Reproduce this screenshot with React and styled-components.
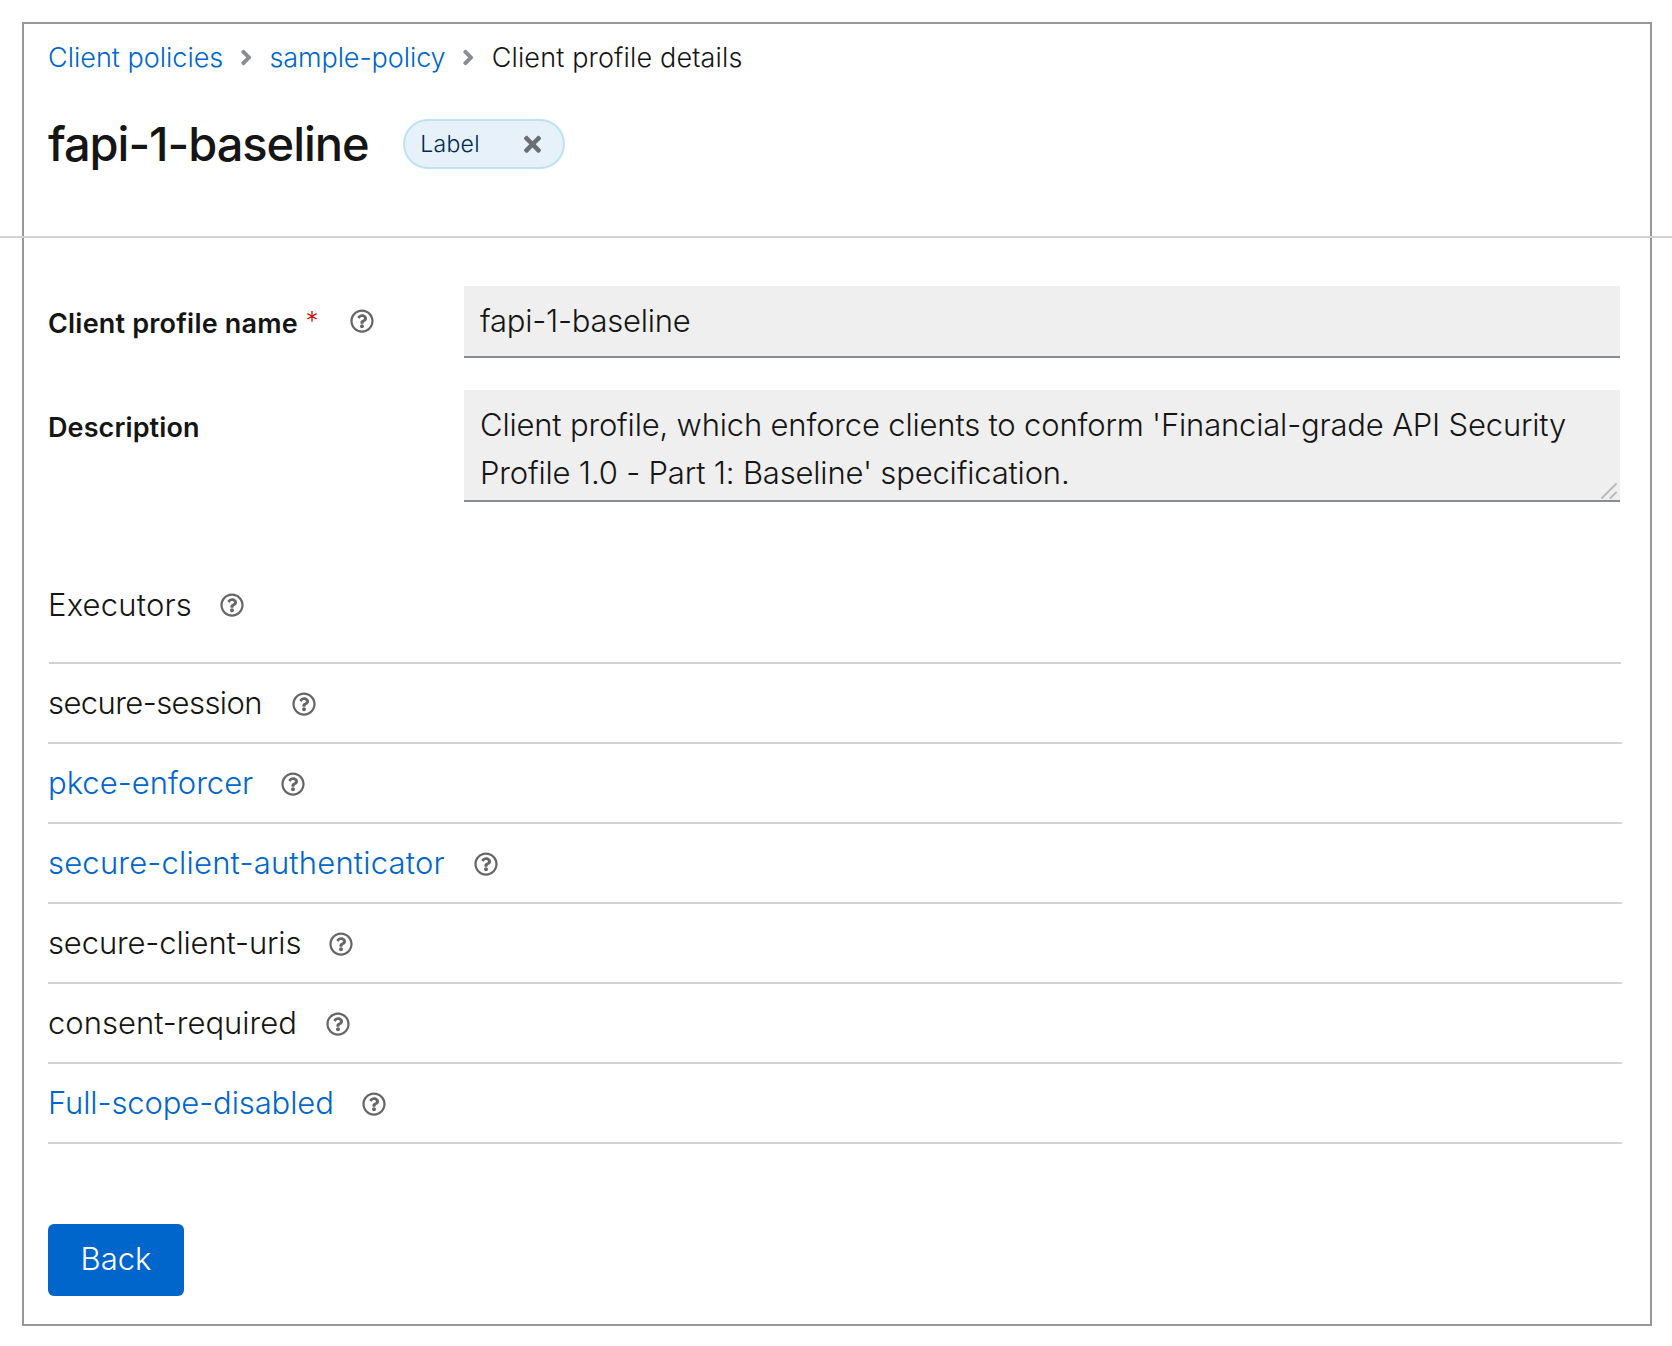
import React from "react";
import styled, { createGlobalStyle } from "styled-components";
import { FaAngleRight, FaRegQuestionCircle, FaTimes } from "react-icons/fa";

const colors = {
  text: "#151515",
  link: "#0066cc",
  line: "#d2d2d2",
  frame: "#979797",
  field: "#efefef",
  fieldLine: "#8a8d90",
  icon: "#666666",
};

const GlobalStyle = createGlobalStyle`
  *, *::before, *::after { box-sizing: border-box; }
  body {
    margin: 0;
    background: #fff;
    color: ${colors.text};
    font-family: Inter, "Liberation Sans", sans-serif;
    font-weight: 300;
  }
`;

const Page = styled.div`
  padding: 22px 20px 20px 22px;
  height: 1346px;
  overflow: hidden;
`;

const Frame = styled.main`
  height: 1304px;
  border: 2px solid ${colors.frame};
`;

const Header = styled.header`
  padding: 12px 28px 67px 24px;
`;

const Breadcrumb = styled.nav`
  display: flex;
  align-items: center;
  gap: 16.8px;
  height: 42px;
  font-size: 27px;
`;

const Crumb = styled.span`
  color: ${(p) => (p.$link ? colors.link : colors.text)};
  letter-spacing: ${(p) => p.$tracking || 0}px;
  white-space: nowrap;
`;

const Separator = styled(FaAngleRight)`
  width: 12.5px;
  height: 25px;
  color: ${colors.fieldLine};
`;

const TitleRow = styled.div`
  display: flex;
  align-items: center;
  gap: 34.2px;
  height: 50px;
  margin-top: 41px;
`;

const Title = styled.h1`
  margin: 0;
  font-size: 47px;
  font-weight: 500;
  line-height: 50px;
  letter-spacing: -1.05px;
`;

const Chip = styled.span`
  display: flex;
  align-items: center;
  justify-content: space-between;
  width: 162px;
  height: 50px;
  padding: 0 22px 0 15.5px;
  border: 2px solid #bee1f4;
  border-radius: 25px;
  background: #e7f1fa;
  color: #002952;
  font-size: 23px;
  letter-spacing: 0.3px;
`;

const ChipClose = styled(FaTimes)`
  width: 17px;
  height: 24.7px;
  color: #6a6e73;
`;

const Divider = styled.hr`
  height: 2px;
  margin: 0 -22px 0 -24px;
  border: 0;
  background: ${colors.line};
`;

const Form = styled.form`
  display: grid;
  grid-template-columns: 416px 1156px;
  row-gap: 32px;
  padding: 48px 0 0 24px;
`;

const FieldLabel = styled.label`
  display: flex;
  align-items: center;
  height: 72px;
  padding-top: 2px;
  font-size: 27px;
  font-weight: 600;
  letter-spacing: ${(p) => p.$tracking}px;
`;

const Required = styled.span`
  width: 13px;
  margin-left: 7.5px;
  padding-bottom: 6px;
  color: #c9190b;
  font-size: 26px;
  font-weight: 300;
`;

const HelpIcon = styled(FaRegQuestionCircle)`
  flex: none;
  width: 24px;
  height: 24px;
  margin-left: ${(p) => p.$gap || 28.2}px;
  color: ${colors.icon};
`;

const LabelHelp = styled(HelpIcon)`
  margin: 0 0 4px 31.5px;
`;

const fieldStyles = `
  display: block;
  width: 100%;
  margin: 0;
  border: 0;
  border-bottom: 2px solid ${colors.fieldLine};
  border-radius: 0;
  outline: 0;
  background: ${colors.field};
  color: ${colors.text};
  font: 300 31px Inter, "Liberation Sans", sans-serif;
`;

const TextInput = styled.input`
  ${fieldStyles}
  height: 72px;
  padding: 0 16px 2px;
  letter-spacing: -0.23px;
`;

const AreaWrap = styled.div`
  position: relative;
  height: 112px;
`;

const TextArea = styled.textarea`
  ${fieldStyles}
  height: 112px;
  padding: 11px 16px 0;
  line-height: 48px;
  letter-spacing: -0.18px;
  overflow: hidden;
  resize: none;
`;

const Grip = styled.svg`
  position: absolute;
  right: 3px;
  bottom: 3px;
  width: 16px;
  height: 16px;
  stroke: #b9b9b9;
  stroke-width: 1.8;
  stroke-linecap: round;
`;

const Section = styled.section`
  padding: 78px 28px 0 24px;
`;

const SectionTitle = styled.h2`
  display: flex;
  align-items: center;
  height: 82px;
  margin: 0;
  padding-bottom: 32px;
  font-size: 31px;
  font-weight: 300;
`;

const List = styled.ul`
  margin: 0;
  padding: 0;
  list-style: none;
`;

const TopRule = styled.div`
  height: 2px;
  margin: 0 1px;
  background: ${colors.line};
`;

const Item = styled.li`
  display: flex;
  align-items: center;
  height: 80px;
  padding-top: 1px;
  border-bottom: 2px solid ${colors.line};
  font-size: 31px;
`;

const ItemName = styled.span`
  padding-bottom: 2px;
  color: ${(p) => (p.$link ? colors.link : colors.text)};
  letter-spacing: ${(p) => p.$tracking}px;
  white-space: nowrap;
`;

const BackButton = styled.button`
  display: block;
  width: 136px;
  height: 72px;
  margin: 80px 0 0 24px;
  padding: 0 0 4px;
  border: 0;
  border-radius: 6px;
  background: ${colors.link};
  color: #fff;
  font: 300 31px Inter, "Liberation Sans", sans-serif;
`;

const executors = [
  { name: "secure-session", tracking: -0.57, gap: 29.6 },
  { name: "pkce-enforcer", tracking: 0 },
  { name: "secure-client-authenticator", tracking: 0.2, gap: 29 },
  { name: "secure-client-uris", tracking: -0.14 },
  { name: "consent-required", tracking: 0, gap: 29 },
  { name: "Full-scope-disabled", tracking: -0.11 },
];

const linked = new Set(["pkce-enforcer", "secure-client-authenticator", "Full-scope-disabled"]);

export default function App() {
  return (
    <Page>
      <GlobalStyle />
      <Frame>
        <Header>
          <Breadcrumb>
            <Crumb $link>Client policies</Crumb>
            <Separator />
            <Crumb $link $tracking={-0.08}>sample-policy</Crumb>
            <Separator />
            <Crumb $tracking={0.15}>Client profile details</Crumb>
          </Breadcrumb>
          <TitleRow>
            <Title>fapi-1-baseline</Title>
            <Chip>
              Label
              <ChipClose />
            </Chip>
          </TitleRow>
        </Header>
        <Divider />
        <Form>
          <FieldLabel htmlFor="name" $tracking={0.2}>
            Client profile name
            <Required>*</Required>
            <LabelHelp />
          </FieldLabel>
          <TextInput id="name" readOnly value="fapi-1-baseline" />
          <FieldLabel htmlFor="description" $tracking={0.1}>Description</FieldLabel>
          <AreaWrap>
            <TextArea
              id="description"
              readOnly
              spellCheck={false}
              value="Client profile, which enforce clients to conform 'Financial-grade API Security Profile 1.0 - Part 1: Baseline' specification."
            />
            <Grip viewBox="0 0 16 16" fill="none">
              <path d="M1 15 15 1M9.5 15 15 9.5" />
            </Grip>
          </AreaWrap>
        </Form>
        <Section>
          <SectionTitle>
            <ItemName $tracking={0.2}>Executors</ItemName>
            <HelpIcon $gap={27.6} />
          </SectionTitle>
          <TopRule />
          <List>
            {executors.map(({ name, tracking, gap }) => (
              <Item key={name}>
                <ItemName $link={linked.has(name)} $tracking={tracking}>{name}</ItemName>
                <HelpIcon $gap={gap} />
              </Item>
            ))}
          </List>
        </Section>
        <BackButton type="button">Back</BackButton>
      </Frame>
    </Page>
  );
}
